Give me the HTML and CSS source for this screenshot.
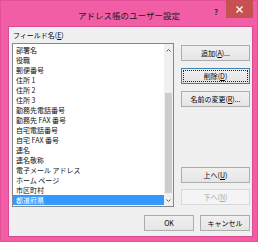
FILE: index.html
```html
<!DOCTYPE html>
<html lang="ja">
<head>
    <meta charset="UTF-8">
    <meta name="viewport" content="width=device-width, initial-scale=1.0">
    <title>アドレス帳のユーザー設定</title>
    <link rel="stylesheet" href="styles.css">
</head>
<body>
    <div class="dialog">
        <div class="title-bar">
            <div class="title-side"></div>
            <div class="title">アドレス帳のユーザー設定</div>
            <div class="title-side title-controls">
                <span class="help">?</span>
                <button class="close">
                    <svg width="7" height="7" viewBox="0 0 7 7">
                        <path d="M0.5 0.5 L6.5 6.5 M6.5 0.5 L0.5 6.5" stroke="#fff" stroke-width="1.4"/>
                    </svg>
                </button>
            </div>
        </div>

        <div class="client">
            <div class="field-label">フィールド名(<u>E</u>)</div>

            <div class="main">
                <div class="listbox">
                    <ul class="items">
                        <li>部署名</li>
                        <li>役職</li>
                        <li>郵便番号</li>
                        <li>住所 1</li>
                        <li>住所 2</li>
                        <li>住所 3</li>
                        <li>勤務先電話番号</li>
                        <li>勤務先 FAX 番号</li>
                        <li>自宅電話番号</li>
                        <li>自宅 FAX 番号</li>
                        <li>連名</li>
                        <li>連名敬称</li>
                        <li>電子メール アドレス</li>
                        <li>ホーム ページ</li>
                        <li>市区町村</li>
                        <li class="selected">都道府県</li>
                    </ul>
                    <div class="scrollbar">
                        <div class="arrow">
                            <svg width="5" height="3" viewBox="0 0 5 3">
                                <path d="M0.5 2.5 L2.5 0.5 L4.5 2.5" fill="none" stroke="#606060" stroke-width="1"/>
                            </svg>
                        </div>
                        <div class="track"></div>
                        <div class="thumb"></div>
                        <div class="arrow arrow-down">
                            <svg width="5" height="3" viewBox="0 0 5 3">
                                <path d="M0.5 0.5 L2.5 2.5 L4.5 0.5" fill="none" stroke="#606060" stroke-width="1"/>
                            </svg>
                        </div>
                    </div>
                </div>

                <div class="side-buttons">
                    <button class="btn">追加(<u>A</u>)...</button>
                    <button class="btn focused"><span class="focus-ring">削除(<u>D</u>)</span></button>
                    <button class="btn">名前の変更(<u>R</u>)...</button>

                    <div class="move-buttons">
                        <button class="btn">上へ(<u>U</u>)</button>
                        <button class="btn" disabled>下へ(<u>N</u>)</button>
                    </div>
                </div>
            </div>

            <div class="footer">
                <button class="btn footer-btn">OK</button>
                <button class="btn footer-btn">キャンセル</button>
            </div>
        </div>
    </div>
</body>
</html>
```

FILE: styles.css
```css
body {
    margin: 0;
    background: #fff;
    font-family: "Noto Sans CJK JP", "Noto Sans", sans-serif;
    color: #000;
}

.dialog {
    width: 258px;
    height: 242px;
    box-sizing: border-box;
    background: #f25ea6;
    border: 1px solid #e2509a;
    display: flex;
    flex-direction: column;
}

/* title bar */
.title-bar {
    height: 25px;
    display: flex;
    align-items: flex-start;
}

.title-side {
    flex: 1;
}

.title {
    font-size: 8.5px;
    line-height: 10px;
    padding-top: 9px;
    color: #1a1a1a;
    white-space: nowrap;
}

.title-controls {
    display: flex;
    justify-content: flex-end;
    align-items: flex-start;
}

.help {
    font-size: 8px;
    font-weight: bold;
    line-height: 10px;
    padding-top: 6px;
    margin-right: 8px;
    color: #333;
}

.close {
    width: 27px;
    height: 18px;
    margin: -1px 4px 0 0;
    padding: 0;
    border: none;
    background: #c75050;
    display: flex;
    justify-content: center;
    align-items: center;
}

/* client area */
.client {
    flex: 1;
    margin: 0 4px 4px 7px;
    background: #f0f0f0;
    border: 1px solid #d84d92;
    padding: 3px 2px 0 3px;
    display: flex;
    flex-direction: column;
}

.field-label {
    font-size: 7px;
    line-height: 10px;
    height: 10px;
    margin-bottom: 3px;
    padding-left: 1px;
}

.main {
    display: flex;
    height: 164px;
}

.listbox {
    width: 162px;
    box-sizing: border-box;
    border: 1px solid #828790;
    background: #fff;
    display: flex;
}

.items {
    flex: 1;
    list-style: none;
    margin: 0;
    padding: 1px 0 0 0;
}

.items li {
    height: 10px;
    line-height: 10px;
    font-size: 7px;
    padding-left: 3px;
    white-space: nowrap;
    color: #111;
}

.items li.selected {
    background: #3399ff;
    color: #fff;
}

.scrollbar {
    width: 9px;
    background: #f0f0f0;
    display: flex;
    flex-direction: column;
}

.arrow {
    height: 12px;
    display: flex;
    justify-content: center;
    align-items: center;
}

.arrow-down {
    margin-top: 1px;
}

.track {
    flex: 1;
}

.thumb {
    height: 100px;
    background: #cdcdcd;
    margin: 0 1px;
}

/* buttons */
.side-buttons {
    width: 69px;
    margin: 2px 0 2px 7px;
    display: flex;
    flex-direction: column;
    gap: 7px;
}

.move-buttons {
    margin-top: auto;
    display: flex;
    flex-direction: column;
    gap: 6px;
}

.btn {
    height: 16px;
    box-sizing: border-box;
    padding: 0;
    border: 1px solid #adadad;
    border-radius: 0;
    background: linear-gradient(#f0f0f0, #e5e5e5);
    font-family: inherit;
    font-size: 7px;
    line-height: 12px;
    color: #000;
    display: flex;
    justify-content: center;
    align-items: center;
}

.btn.focused {
    border-color: #3c7fb1;
    padding: 1px;
}

.focus-ring {
    flex: 1;
    align-self: stretch;
    border: 1px dotted #222;
    display: flex;
    justify-content: center;
    align-items: center;
}

.btn:disabled {
    border-color: #d9d9d9;
    background: #f4f4f4;
    color: #a8a8a8;
}

.footer {
    display: flex;
    justify-content: flex-end;
    gap: 6px;
    margin-top: 8px;
}

.footer-btn {
    width: 50px;
}
```
